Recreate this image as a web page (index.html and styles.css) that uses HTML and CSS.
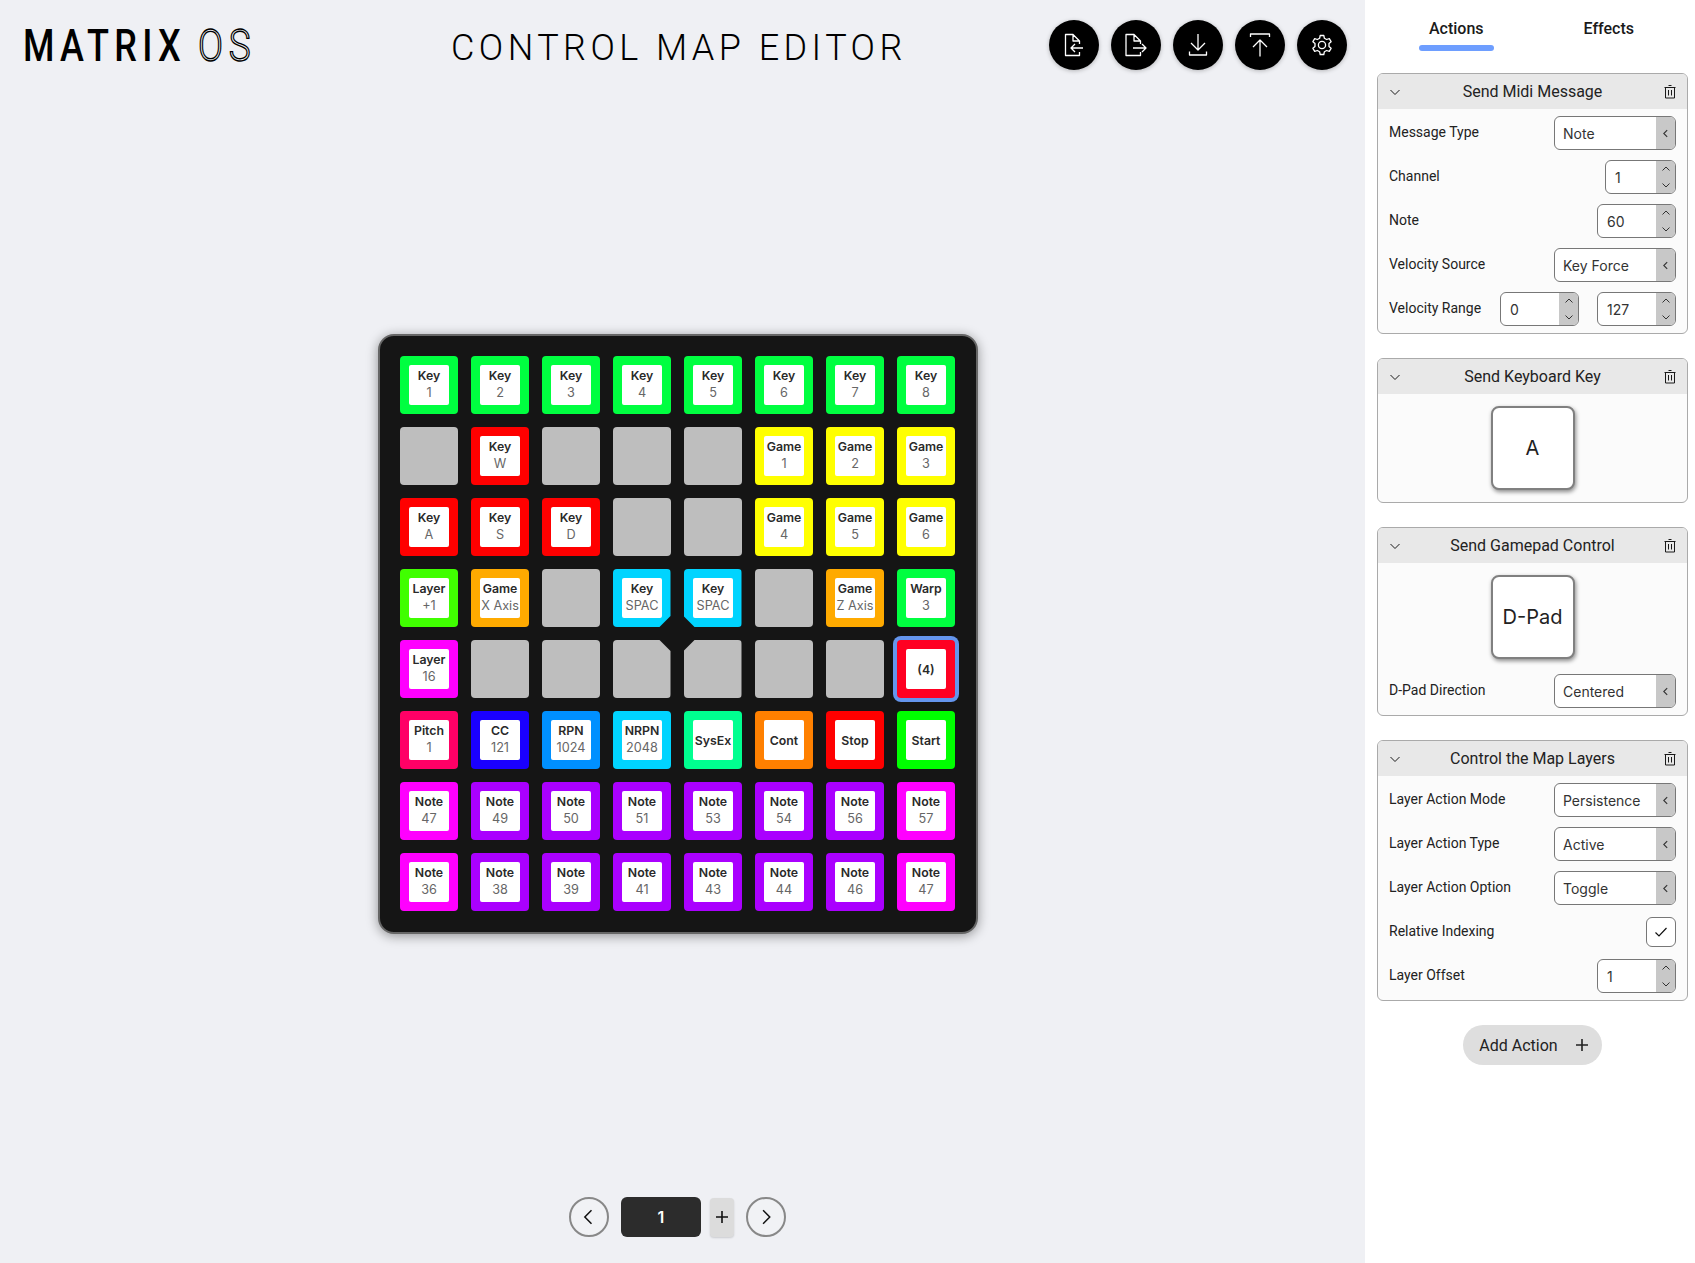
FILE: index.html
```html
<!DOCTYPE html>
<html lang="en">
  <head>
    <meta charset="UTF-8" />
    <title>Matrix OS - Control Map Editor</title>
    <link rel="stylesheet" href="styles.css">
  </head>
  <body>
    <main class="editor">
      <header class="topbar">
        <div class="logo"><span class="logo-a">MATRIX</span><span class="logo-b">OS</span></div>
        <h1 class="title">CONTROL MAP EDITOR</h1>
        <div class="tools">
          <button class="tool">
            <svg viewBox="0 0 24 24"><path d="M17.5 11V8L11 1.5H3.5V22.5H17.5V19M11 1.5V8H17.5M21 15H9M13 11L9 15L13 19"/></svg>
          </button>
          <button class="tool">
            <svg viewBox="0 0 24 24"><path d="M16.5 11V8L10 1.5H2V22.5H16.5V19M10 1.5V8H16.5M9 15H22M18 11L22 15L18 19"/></svg>
          </button>
          <button class="tool">
            <svg viewBox="0 0 24 24"><path d="M12 1V17M5 10L12 17L19 10M3.5 18.5V22H20.5V18.5"/></svg>
          </button>
          <button class="tool">
            <svg viewBox="0 0 24 24"><path d="M12 23.5V7M5 14L12 7L19 14M2.5 4V1H21.5V4"/></svg>
          </button>
          <button class="tool">
            <svg viewBox="0 0 24 24"><circle cx="12" cy="12" r="3.6"/><path d="M10.2 2.5H13.8L14.4 5.3L16.6 6.5L19.3 5.6L21.1 8.7L19 10.6V13.4L21.1 15.3L19.3 18.4L16.6 17.5L14.4 18.7L13.8 21.5H10.2L9.6 18.7L7.4 17.5L4.7 18.4L2.9 15.3L5 13.4V10.6L2.9 8.7L4.7 5.6L7.4 6.5L9.6 5.3Z"/></svg>
          </button>
        </div>
      </header>

      <section class="stage">
        <div class="board">
          <div class="pad green"><div class="cap"><b>Key</b><span>1</span></div></div>
          <div class="pad green"><div class="cap"><b>Key</b><span>2</span></div></div>
          <div class="pad green"><div class="cap"><b>Key</b><span>3</span></div></div>
          <div class="pad green"><div class="cap"><b>Key</b><span>4</span></div></div>
          <div class="pad green"><div class="cap"><b>Key</b><span>5</span></div></div>
          <div class="pad green"><div class="cap"><b>Key</b><span>6</span></div></div>
          <div class="pad green"><div class="cap"><b>Key</b><span>7</span></div></div>
          <div class="pad green"><div class="cap"><b>Key</b><span>8</span></div></div>

          <div class="pad"></div>
          <div class="pad red"><div class="cap"><b>Key</b><span>W</span></div></div>
          <div class="pad"></div>
          <div class="pad"></div>
          <div class="pad"></div>
          <div class="pad yellow"><div class="cap"><b>Game</b><span>1</span></div></div>
          <div class="pad yellow"><div class="cap"><b>Game</b><span>2</span></div></div>
          <div class="pad yellow"><div class="cap"><b>Game</b><span>3</span></div></div>

          <div class="pad red"><div class="cap"><b>Key</b><span>A</span></div></div>
          <div class="pad red"><div class="cap"><b>Key</b><span>S</span></div></div>
          <div class="pad red"><div class="cap"><b>Key</b><span>D</span></div></div>
          <div class="pad"></div>
          <div class="pad"></div>
          <div class="pad yellow"><div class="cap"><b>Game</b><span>4</span></div></div>
          <div class="pad yellow"><div class="cap"><b>Game</b><span>5</span></div></div>
          <div class="pad yellow"><div class="cap"><b>Game</b><span>6</span></div></div>

          <div class="pad lime"><div class="cap"><b>Layer</b><span>+1</span></div></div>
          <div class="pad amber"><div class="cap"><b>Game</b><span>X Axis</span></div></div>
          <div class="pad"></div>
          <div class="pad cyan cut-br"><div class="cap"><b>Key</b><span>SPAC</span></div></div>
          <div class="pad cyan cut-bl"><div class="cap"><b>Key</b><span>SPAC</span></div></div>
          <div class="pad"></div>
          <div class="pad amber"><div class="cap"><b>Game</b><span>Z Axis</span></div></div>
          <div class="pad green"><div class="cap"><b>Warp</b><span>3</span></div></div>

          <div class="pad magenta"><div class="cap"><b>Layer</b><span>16</span></div></div>
          <div class="pad"></div>
          <div class="pad"></div>
          <div class="pad cut-tr"></div>
          <div class="pad cut-tl"></div>
          <div class="pad"></div>
          <div class="pad"></div>
          <div class="pad crimson selected"><div class="cap"><b>(4)</b></div></div>

          <div class="pad rose"><div class="cap"><b>Pitch</b><span>1</span></div></div>
          <div class="pad blue"><div class="cap"><b>CC</b><span>121</span></div></div>
          <div class="pad azure"><div class="cap"><b>RPN</b><span>1024</span></div></div>
          <div class="pad cyan"><div class="cap"><b>NRPN</b><span>2048</span></div></div>
          <div class="pad mint"><div class="cap"><b>SysEx</b></div></div>
          <div class="pad orange"><div class="cap"><b>Cont</b></div></div>
          <div class="pad red"><div class="cap"><b>Stop</b></div></div>
          <div class="pad pure-green"><div class="cap"><b>Start</b></div></div>

          <div class="pad magenta"><div class="cap"><b>Note</b><span>47</span></div></div>
          <div class="pad purple"><div class="cap"><b>Note</b><span>49</span></div></div>
          <div class="pad purple"><div class="cap"><b>Note</b><span>50</span></div></div>
          <div class="pad purple"><div class="cap"><b>Note</b><span>51</span></div></div>
          <div class="pad purple"><div class="cap"><b>Note</b><span>53</span></div></div>
          <div class="pad purple"><div class="cap"><b>Note</b><span>54</span></div></div>
          <div class="pad purple"><div class="cap"><b>Note</b><span>56</span></div></div>
          <div class="pad magenta"><div class="cap"><b>Note</b><span>57</span></div></div>

          <div class="pad magenta"><div class="cap"><b>Note</b><span>36</span></div></div>
          <div class="pad purple"><div class="cap"><b>Note</b><span>38</span></div></div>
          <div class="pad purple"><div class="cap"><b>Note</b><span>39</span></div></div>
          <div class="pad purple"><div class="cap"><b>Note</b><span>41</span></div></div>
          <div class="pad purple"><div class="cap"><b>Note</b><span>43</span></div></div>
          <div class="pad purple"><div class="cap"><b>Note</b><span>44</span></div></div>
          <div class="pad purple"><div class="cap"><b>Note</b><span>46</span></div></div>
          <div class="pad magenta"><div class="cap"><b>Note</b><span>47</span></div></div>
        </div>
      </section>

      <nav class="pager">
        <button class="round">
          <svg viewBox="0 0 24 24"><path d="M15 4L7 12L15 20"/></svg>
        </button>
        <div class="page">1</div>
        <button class="add-page">
          <svg viewBox="0 0 14 14"><path d="M7 1V13M1 7H13"/></svg>
        </button>
        <button class="round">
          <svg viewBox="0 0 24 24"><path d="M8.5 4L16.5 12L8.5 20"/></svg>
        </button>
      </nav>
    </main>

    <aside class="sidebar">
      <div class="tabs">
        <div class="tab active"><span>Actions</span></div>
        <div class="tab"><span>Effects</span></div>
      </div>

      <div class="cards">
        <section class="card">
          <header class="card-head">
            <svg class="chev" viewBox="0 0 12 12"><path d="M1.5 4L6 8.5L10.5 4"/></svg>
            <h2>Send Midi Message</h2>
            <svg class="trash" viewBox="0 0 12 14"><path d="M.5 2.5H11.5M4.5 .5H7.5M1.5 2.5V13H10.5V2.5M4.5 5V10.5M7.5 5V10.5"/></svg>
          </header>
          <div class="card-body">
            <div class="row">
              <label>Message Type</label>
              <div class="select"><span>Note</span><i><svg viewBox="0 0 8 8"><path d="M5.5 1L2.5 4L5.5 7"/></svg></i></div>
            </div>
            <div class="row">
              <label>Channel</label>
              <div class="number w-71"><span>1</span><i><svg viewBox="0 0 10 8"><path d="M1.5 5.5L5 2L8.5 5.5"/></svg><svg viewBox="0 0 10 8"><path d="M1.5 2.5L5 6L8.5 2.5"/></svg></i></div>
            </div>
            <div class="row">
              <label>Note</label>
              <div class="number"><span>60</span><i><svg viewBox="0 0 10 8"><path d="M1.5 5.5L5 2L8.5 5.5"/></svg><svg viewBox="0 0 10 8"><path d="M1.5 2.5L5 6L8.5 2.5"/></svg></i></div>
            </div>
            <div class="row">
              <label>Velocity Source</label>
              <div class="select"><span>Key Force</span><i><svg viewBox="0 0 8 8"><path d="M5.5 1L2.5 4L5.5 7"/></svg></i></div>
            </div>
            <div class="row">
              <label>Velocity Range</label>
              <div class="pair">
                <div class="number"><span>0</span><i><svg viewBox="0 0 10 8"><path d="M1.5 5.5L5 2L8.5 5.5"/></svg><svg viewBox="0 0 10 8"><path d="M1.5 2.5L5 6L8.5 2.5"/></svg></i></div>
                <div class="number"><span>127</span><i><svg viewBox="0 0 10 8"><path d="M1.5 5.5L5 2L8.5 5.5"/></svg><svg viewBox="0 0 10 8"><path d="M1.5 2.5L5 6L8.5 2.5"/></svg></i></div>
              </div>
            </div>
          </div>
        </section>

        <section class="card">
          <header class="card-head">
            <svg class="chev" viewBox="0 0 12 12"><path d="M1.5 4L6 8.5L10.5 4"/></svg>
            <h2>Send Keyboard Key</h2>
            <svg class="trash" viewBox="0 0 12 14"><path d="M.5 2.5H11.5M4.5 .5H7.5M1.5 2.5V13H10.5V2.5M4.5 5V10.5M7.5 5V10.5"/></svg>
          </header>
          <div class="card-body key-body">
            <div class="keycap">A</div>
          </div>
        </section>

        <section class="card">
          <header class="card-head">
            <svg class="chev" viewBox="0 0 12 12"><path d="M1.5 4L6 8.5L10.5 4"/></svg>
            <h2>Send Gamepad Control</h2>
            <svg class="trash" viewBox="0 0 12 14"><path d="M.5 2.5H11.5M4.5 .5H7.5M1.5 2.5V13H10.5V2.5M4.5 5V10.5M7.5 5V10.5"/></svg>
          </header>
          <div class="card-body key-body pad-tail">
            <div class="keycap">D-Pad</div>
            <div class="row">
              <label>D-Pad Direction</label>
              <div class="select"><span>Centered</span><i><svg viewBox="0 0 8 8"><path d="M5.5 1L2.5 4L5.5 7"/></svg></i></div>
            </div>
          </div>
        </section>

        <section class="card">
          <header class="card-head">
            <svg class="chev" viewBox="0 0 12 12"><path d="M1.5 4L6 8.5L10.5 4"/></svg>
            <h2>Control the Map Layers</h2>
            <svg class="trash" viewBox="0 0 12 14"><path d="M.5 2.5H11.5M4.5 .5H7.5M1.5 2.5V13H10.5V2.5M4.5 5V10.5M7.5 5V10.5"/></svg>
          </header>
          <div class="card-body">
            <div class="row">
              <label>Layer Action Mode</label>
              <div class="select"><span>Persistence</span><i><svg viewBox="0 0 8 8"><path d="M5.5 1L2.5 4L5.5 7"/></svg></i></div>
            </div>
            <div class="row">
              <label>Layer Action Type</label>
              <div class="select"><span>Active</span><i><svg viewBox="0 0 8 8"><path d="M5.5 1L2.5 4L5.5 7"/></svg></i></div>
            </div>
            <div class="row">
              <label>Layer Action Option</label>
              <div class="select"><span>Toggle</span><i><svg viewBox="0 0 8 8"><path d="M5.5 1L2.5 4L5.5 7"/></svg></i></div>
            </div>
            <div class="row">
              <label>Relative Indexing</label>
              <div class="check"><svg viewBox="0 0 14 12"><path d="M1.5 6.5L5 10L12.5 2"/></svg></div>
            </div>
            <div class="row">
              <label>Layer Offset</label>
              <div class="number"><span>1</span><i><svg viewBox="0 0 10 8"><path d="M1.5 5.5L5 2L8.5 5.5"/></svg><svg viewBox="0 0 10 8"><path d="M1.5 2.5L5 6L8.5 2.5"/></svg></i></div>
            </div>
          </div>
        </section>
      </div>

      <button class="add-action">Add Action
        <svg viewBox="0 0 12 12"><path d="M6 0V12M0 6H12"/></svg>
      </button>
    </aside>
  </body>
</html>
```

FILE: styles.css
```css
* {
  box-sizing: border-box;
}
html,
body {
  height: 100%;
}
body {
  margin: 0;
  display: flex;
  overflow: hidden;
  background: #eff0f4;
  color: #1a1a1a;
  font-family: Roboto, "Noto Sans", sans-serif;
}
svg {
  fill: none;
  stroke: currentColor;
  display: block;
}
button {
  border: none;
  padding: 0;
  font-family: inherit;
  cursor: pointer;
}

/* left part */
.editor {
  flex: 0 0 1365px;
  height: 100%;
  display: flex;
  flex-direction: column;
  padding-right: 10px;
}
.topbar {
  display: flex;
  align-items: flex-start;
  height: 90px;
  padding: 20px 8px 0 23px;
}
.logo {
  flex: 0 0 428px;
  display: flex;
  height: 50px;
  margin-top: 1px;
  align-items: center;
  font-size: 45px;
  line-height: 50px;
  color: #000;
}
.logo-a {
  display: inline-block;
  font-weight: 500;
  letter-spacing: 6.6px;
  transform: scaleX(0.8);
  transform-origin: left center;
  width: 175px;
}
.logo-b {
  display: inline-block;
  font-weight: 300;
  letter-spacing: 7px;
  color: transparent;
  -webkit-text-stroke: 1.4px #000;
  transform: scaleX(0.82);
  transform-origin: left center;
}
.title {
  margin: 5px 0 0;
  font-size: 36px;
  font-weight: 300;
  line-height: 46px;
  letter-spacing: 4.45px;
  color: #000;
  white-space: nowrap;
}
.tools {
  margin-left: auto;
  display: flex;
  gap: 12px;
}
.tool {
  width: 50px;
  height: 50px;
  border-radius: 50%;
  background: #000;
  color: #fff;
  display: flex;
  align-items: center;
  justify-content: center;
  box-shadow: 0 1px 4px rgba(0, 0, 0, 0.25);
}
.tool svg {
  width: 24px;
  height: 24px;
  stroke-width: 1.3;
  stroke-linejoin: round;
}

/* the grid */
.stage {
  display: flex;
  justify-content: center;
  padding-top: 244px;
}
.board {
  display: grid;
  grid-template-columns: repeat(8, 58px);
  grid-auto-rows: 58px;
  gap: 13px;
  padding: 20px 21px 21px 20px;
  background: #151515;
  border: 2px solid #666;
  border-radius: 16px;
  box-shadow: 0 2px 12px rgba(0, 0, 0, 0.4);
}
.pad {
  border-radius: 4px;
  background: #bebebe;
  padding: 9px;
}
.cap {
  width: 40px;
  height: 40px;
  padding: 0 0 2px 1px;
  background: #fff;
  border-radius: 2px;
  display: flex;
  flex-direction: column;
  align-items: center;
  justify-content: center;
  font-family: Inter, Roboto, sans-serif;
  font-size: 12.3px;
  line-height: 17px;
  white-space: nowrap;
}
.cap b {
  font-weight: 600;
  color: #2a2a2a;
}
.cap b:only-child {
  margin-top: 2px;
}
.cap span {
  font-size: 12.7px;
  color: #666;
}
.green { background: #00ff40; }
.red { background: #ff0000; }
.yellow { background: #ffff00; }
.lime { background: #40ff00; }
.amber { background: #ffaa00; }
.cyan { background: #00d4ff; }
.magenta { background: #ff00ff; }
.crimson { background: #ff0022; }
.rose { background: #ff0066; }
.blue { background: #1a00ff; }
.azure { background: #0090ff; }
.mint { background: #00ff90; }
.orange { background: #ff8000; }
.pure-green { background: #00ff00; }
.purple { background: #aa00ff; }
.selected {
  box-shadow: 0 0 0 4px #6495ed;
}
.cut-br { clip-path: polygon(0 0, 100% 0, 100% calc(100% - 11px), calc(100% - 11px) 100%, 0 100%); }
.cut-bl { clip-path: polygon(0 0, 100% 0, 100% 100%, 11px 100%, 0 calc(100% - 11px)); }
.cut-tr { clip-path: polygon(0 0, calc(100% - 11px) 0, 100% 11px, 100% 100%, 0 100%); }
.cut-tl { clip-path: polygon(11px 0, 100% 0, 100% 100%, 0 100%, 0 11px); }

/* page switcher */
.pager {
  margin-top: auto;
  padding-bottom: 26px;
  display: flex;
  justify-content: center;
  align-items: center;
}
.round {
  width: 40px;
  height: 40px;
  border-radius: 50%;
  border: 2px solid #888;
  background: #f1f2f5;
  color: #111;
  display: flex;
  align-items: center;
  justify-content: center;
}
.round svg {
  width: 20px;
  height: 20px;
  stroke-width: 1.8;
}
.page {
  width: 80px;
  height: 40px;
  margin: 0 9px 0 12px;
  border-radius: 6px;
  background: #2c2c2c;
  color: #fff;
  font-family: Inter, Roboto, sans-serif;
  font-size: 16px;
  font-weight: 600;
  line-height: 40px;
  text-align: center;
}
.add-page {
  width: 24px;
  height: 39px;
  margin-right: 12px;
  border-radius: 4px;
  background: #dcdcdc;
  color: #111;
  display: flex;
  align-items: center;
  justify-content: center;
  box-shadow: 0 1px 2px rgba(0, 0, 0, 0.15);
}
.add-page svg {
  width: 14px;
  height: 14px;
  stroke-width: 1.6;
}

/* right part */
.sidebar {
  flex: 1;
  height: 100%;
  background: #fff;
  padding: 0 7px 0 12px;
}
.tabs {
  display: flex;
  height: 73px;
  padding: 0 3px;
}
.tab {
  flex: 1;
  display: flex;
  justify-content: center;
  font-size: 16px;
  font-weight: 500;
  line-height: 20px;
  padding-top: 19px;
  color: #1a1a1a;
}
.tab.active {
  position: relative;
}
.tab.active::after {
  content: "";
  position: absolute;
  top: 45px;
  left: 39px;
  width: 75px;
  height: 6px;
  border-radius: 3px;
  background: #6e9eff;
}
.cards {
  display: flex;
  flex-direction: column;
  gap: 24px;
}
.card {
  border: 1px solid #aaa;
  border-radius: 6px;
  background: #fbfbfb;
  overflow: hidden;
}
.card-head {
  height: 35px;
  background: #e8e8e8;
  display: flex;
  align-items: center;
  padding: 0 11px;
}
.card-head h2 {
  flex: 1;
  margin: 0;
  font-size: 16px;
  font-weight: 400;
  text-align: center;
  color: #222;
}
.chev {
  width: 12px;
  height: 12px;
  margin-right: -12px;
  stroke-width: 1;
}
.trash {
  width: 12px;
  height: 14px;
  margin-left: -12px;
  stroke-width: 1;
}
.card-body {
  display: flex;
  flex-direction: column;
  gap: 10px;
  padding: 7px 11px 7px 11px;
}
.key-body {
  align-items: center;
  gap: 15px;
  padding-top: 12px;
  padding-bottom: 12px;
}
.pad-tail {
  padding-bottom: 7px;
}
.key-body .row {
  align-self: stretch;
}
.keycap {
  width: 84px;
  height: 84px;
  border: 2px solid #808080;
  border-radius: 8px;
  background: #fff;
  box-shadow: 1px 2px 4px rgba(0, 0, 0, 0.45);
  display: flex;
  align-items: center;
  justify-content: center;
  font-family: Inter, Roboto, sans-serif;
  font-size: 20px;
  color: #222;
}
.row {
  display: flex;
  height: 34px;
  align-items: center;
  justify-content: space-between;
}
.row label {
  font-size: 14px;
  color: #222;
  margin-top: -2px;
}
.select,
.number {
  height: 34px;
  border: 1px solid #777;
  border-radius: 6px;
  background: #fff;
  display: flex;
  overflow: hidden;
  font-family: Inter, Roboto, sans-serif;
  font-size: 14px;
  line-height: 34px;
  color: #333;
}
.select span,
.number span {
  flex: 1;
  padding-left: 8px;
}
.select i,
.number i {
  flex: 0 0 19px;
  background: #c8c8c8;
  display: flex;
  flex-direction: column;
  align-items: center;
  justify-content: center;
  color: #333;
}
.select {
  width: 122px;
}
.select i svg {
  width: 9px;
  height: 9px;
  stroke-width: 1;
}
.number {
  width: 79px;
}
.number span {
  padding-left: 9px;
}
.number i {
  justify-content: space-between;
  padding: 4px 0;
}
.number i svg {
  width: 10px;
  height: 8px;
  stroke-width: 1;
}
.w-71 {
  width: 71px;
}
.pair {
  display: flex;
  gap: 18px;
}
.check {
  width: 30px;
  height: 30px;
  border: 1px solid #777;
  border-radius: 6px;
  background: #fff;
  display: flex;
  align-items: center;
  justify-content: center;
  color: #111;
}
.check svg {
  width: 14px;
  height: 12px;
  stroke-width: 1.2;
}
.add-action {
  display: flex;
  align-items: center;
  justify-content: center;
  gap: 18px;
  width: 139px;
  height: 40px;
  margin: 24px auto 0;
  padding-left: 2px;
  border-radius: 20px;
  background: #dedede;
  color: #222;
  font-size: 16px;
}
.add-action svg {
  width: 12px;
  height: 12px;
  stroke-width: 1.6;
}
```
